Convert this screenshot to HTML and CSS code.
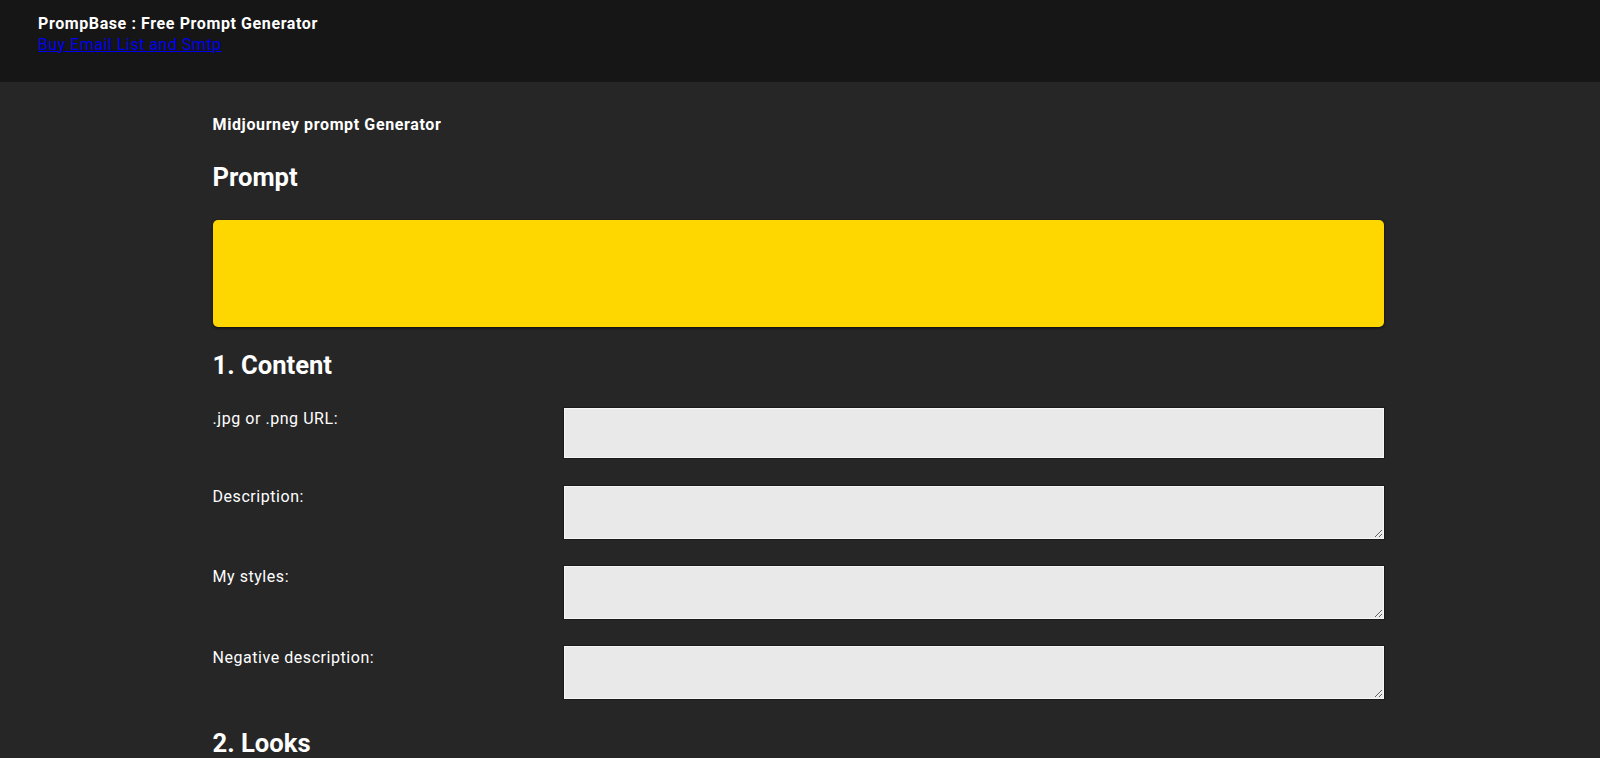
FILE: index.html
```html
<!DOCTYPE html>
<html>
<head>
<meta charset="utf-8">
<title>PrompBase : Free Prompt Generator</title>
<link rel="stylesheet" href="styles.css">
</head>
<body>
<header class="topbar">
  <div class="brand">PrompBase : Free Prompt Generator</div>
  <a class="toplink" href="#">Buy Email List and Smtp</a>
</header>
<main class="page">
  <div class="subtitle">Midjourney prompt Generator</div>
  <h2 class="heading">Prompt</h2>
  <div class="prompt-box"></div>
  <h2 class="heading section">1. Content</h2>
  <div class="row">
    <label class="label">.jpg or .png URL:</label>
    <input class="field field-input" type="text">
  </div>
  <div class="row row-2">
    <label class="label">Description:</label>
    <textarea class="field field-area"></textarea>
  </div>
  <div class="row row-3">
    <label class="label">My styles:</label>
    <textarea class="field field-area"></textarea>
  </div>
  <div class="row row-4">
    <label class="label">Negative description:</label>
    <textarea class="field field-area"></textarea>
  </div>
  <h2 class="heading section looks">2. Looks</h2>
</main>
</body>
</html>
```
FILE: styles.css
```css
html, body {
  margin: 0;
  padding: 0;
}
body {
  background: #262626;
  color: #ffffff;
  font-family: Roboto, "Liberation Sans", Arial, sans-serif;
  font-size: 16px;
  overflow: hidden;
  height: 758px;
}
.topbar {
  background: #161616;
  height: 82px;
  box-sizing: border-box;
  padding: 13px 0 0 38px;
}
.brand {
  font-weight: 700;
  font-size: 16px;
  line-height: 21px;
  letter-spacing: 0.6px;
  color: #ffffff;
}
.toplink {
  display: inline-block;
  font-size: 16px;
  line-height: 21px;
  letter-spacing: 0.5px;
  color: #0000ee;
  text-decoration: underline;
}
.page {
  width: 1171px;
  margin-left: 212.5px;
  padding-top: 32.8px;
}
.subtitle {
  font-weight: 700;
  font-size: 16px;
  letter-spacing: 0.62px;
  line-height: normal;
}
.heading {
  margin: 0;
  font-size: 25.6px;
  font-weight: 700;
  line-height: 30px;
  margin-top: 28.6px;
}
.heading.section {
  margin-top: 23px;
}
.heading.looks {
  margin-top: 28.5px;
}
.prompt-box {
  margin-top: 27.8px;
  height: 107px;
  background: #ffd700;
  border-radius: 5px;
  box-shadow: 0 1px 3px rgba(0, 0, 0, 0.7);
}
.row {
  display: flex;
  align-items: flex-start;
  margin-top: 27.5px;
}
.row-2 {
  margin-top: 28px;
}
.row-3 {
  margin-top: 27px;
}
.row-4 {
  margin-top: 27.8px;
}
.label {
  width: 351.5px;
  flex: none;
  padding-top: 1.5px;
  font-size: 16px;
  letter-spacing: 0.55px;
  color: #ffffff;
}
.field {
  flex: 1;
  box-sizing: border-box;
  margin: 0;
  background: #e9e9e9;
  border: 1px solid #f6f6f6;
  box-shadow: 0 0 0 1px #1a1a1a;
  border-radius: 0;
  font-family: Roboto, sans-serif;
  font-size: 14px;
  outline: none;
  display: block;
}
.field-input {
  height: 50px;
}
.field-area {
  height: 53px;
  resize: vertical;
}
```
